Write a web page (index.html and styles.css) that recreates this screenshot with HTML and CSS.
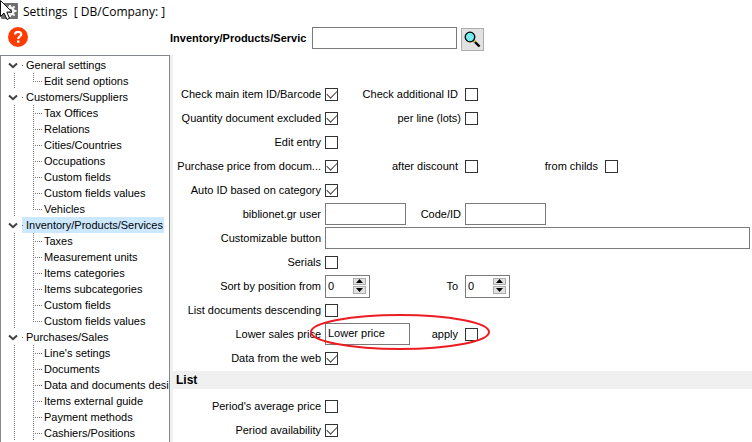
FILE: index.html
```html
<!DOCTYPE html>
<html lang="en">
<head>
<meta charset="utf-8">
<title>Settings</title>
<link rel="stylesheet" href="styles.css">
</head>
<body>
<header class="titlebar">
  <svg class="app-icon" width="19" height="22" viewBox="0 0 19 22" aria-hidden="true">
    <rect x="1" y="3" width="17" height="16" rx="1" fill="#6e6e6e"/>
    <circle cx="10" cy="11" r="3.5" fill="none" stroke="#f4f4f4" stroke-width="2.6"/>
    <path d="M10 5v2M10 15v2M14 11h2.5M6 7l2 2M13 14l1.6 1.6M14.6 6.4L13 8" stroke="#f4f4f4" stroke-width="2"/>
    <path d="M0.5 0.5V16.5L4 13L7 19.5L9.5 18.3L6.8 12H12Z" fill="#fff" stroke="#111" stroke-width="1"/>
  </svg>
  <h1 class="title">Settings&nbsp; [ DB/Company: ]</h1>
</header>

<div class="toolbar">
  <button class="help" type="button" aria-label="Help">
    <svg width="20" height="20" viewBox="0 0 20 20" aria-hidden="true">
      <circle cx="10" cy="10" r="10" fill="#ff3c00"/>
      <path d="M7 7.6C7 3.9 13.2 4 13.2 7.4C13.2 9.5 10.2 9.5 10.2 12" fill="none" stroke="#fff" stroke-width="2.2"/>
      <rect x="9" y="13.4" width="2.4" height="2.4" fill="#fff"/>
    </svg>
  </button>
  <label class="page-name" for="search">Inventory/Products/Servic</label>
  <input class="field search" id="search" type="text">
  <button class="find" type="button" aria-label="Search">
    <svg width="17" height="17" viewBox="0 0 17 17" aria-hidden="true">
      <path d="M10 10L15.5 15.5" stroke="#000" stroke-width="2.4"/>
      <path d="M10 11.2L11.4 9.8" stroke="#e8e000" stroke-width="1.6"/>
      <circle cx="6" cy="6" r="4.8" fill="#5fe8ee" stroke="#000" stroke-width="1.3"/>
      <path d="M3 6.5L6.5 3M4 8.5L8.5 4M6 9.2L9 6.2" stroke="#fff" stroke-width="1" stroke-dasharray="1 1"/>
    </svg>
  </button>
</div>

<div class="workspace">
  <nav class="tree" aria-label="Settings sections">
    <ul class="groups">
      <li>
        <div class="group"><svg class="chevron" viewBox="0 0 10 7"><path d="M1 1.5L5 5.2L9 1.5"/></svg><a href="#" class="group-name">General settings</a></div>
        <ul class="items">
          <li><a href="#">Edit send options</a></li>
        </ul>
      </li>
      <li>
        <div class="group"><svg class="chevron" viewBox="0 0 10 7"><path d="M1 1.5L5 5.2L9 1.5"/></svg><a href="#" class="group-name">Customers/Suppliers</a></div>
        <ul class="items">
          <li><a href="#">Tax Offices</a></li>
          <li><a href="#">Relations</a></li>
          <li><a href="#">Cities/Countries</a></li>
          <li><a href="#">Occupations</a></li>
          <li><a href="#">Custom fields</a></li>
          <li><a href="#">Custom fields values</a></li>
          <li><a href="#">Vehicles</a></li>
        </ul>
      </li>
      <li>
        <div class="group"><svg class="chevron" viewBox="0 0 10 7"><path d="M1 1.5L5 5.2L9 1.5"/></svg><a href="#" class="group-name selected">Inventory/Products/Services</a></div>
        <ul class="items">
          <li><a href="#">Taxes</a></li>
          <li><a href="#">Measurement units</a></li>
          <li><a href="#">Items categories</a></li>
          <li><a href="#">Items subcategories</a></li>
          <li><a href="#">Custom fields</a></li>
          <li><a href="#">Custom fields values</a></li>
        </ul>
      </li>
      <li>
        <div class="group"><svg class="chevron" viewBox="0 0 10 7"><path d="M1 1.5L5 5.2L9 1.5"/></svg><a href="#" class="group-name">Purchases/Sales</a></div>
        <ul class="items open">
          <li><a href="#">Line's setings</a></li>
          <li><a href="#">Documents</a></li>
          <li><a href="#">Data and documents desi</a></li>
          <li><a href="#">Items external guide</a></li>
          <li><a href="#">Payment methods</a></li>
          <li><a href="#">Cashiers/Positions</a></li>
        </ul>
      </li>
    </ul>
  </nav>

  <main class="panel">
    <form class="form">
      <div class="row">
        <label class="caption" for="main-id">Check main item ID/Barcode</label>
        <div class="cell"><input class="check" id="main-id" type="checkbox" checked><label class="next" for="add-id">Check additional ID</label></div>
        <div class="cell"><input class="check" id="add-id" type="checkbox"></div>
      </div>
      <div class="row">
        <label class="caption" for="qty">Quantity document excluded</label>
        <div class="cell"><input class="check" id="qty" type="checkbox" checked><label class="next tight" for="lots">per line (lots)</label></div>
        <div class="cell"><input class="check" id="lots" type="checkbox"></div>
      </div>
      <div class="row">
        <label class="caption" for="edit">Edit entry</label>
        <div class="cell"><input class="check" id="edit" type="checkbox"></div>
      </div>
      <div class="row">
        <label class="caption" for="purchase">Purchase price from docum...</label>
        <div class="cell"><input class="check" id="purchase" type="checkbox" checked><label class="next" for="discount">after discount</label></div>
        <div class="cell"><input class="check" id="discount" type="checkbox"><label class="next" for="childs">from childs</label></div>
        <div class="cell"><input class="check" id="childs" type="checkbox"></div>
      </div>
      <div class="row">
        <label class="caption" for="auto-id">Auto ID based on category</label>
        <div class="cell"><input class="check" id="auto-id" type="checkbox" checked></div>
      </div>
      <div class="row">
        <label class="caption" for="user">biblionet.gr user</label>
        <div class="cell"><input class="field short" id="user" type="text"><label class="next tight" for="code">Code/ID</label></div>
        <div class="cell"><input class="field short" id="code" type="text"></div>
      </div>
      <div class="row">
        <label class="caption" for="custom">Customizable button</label>
        <div class="cell wide"><input class="field full" id="custom" type="text"></div>
      </div>
      <div class="row">
        <label class="caption" for="serials">Serials</label>
        <div class="cell"><input class="check" id="serials" type="checkbox"></div>
      </div>
      <div class="row">
        <label class="caption" for="from">Sort by position from</label>
        <div class="cell">
          <span class="spin"><input id="from" type="text" value="0"><span class="steps"><button type="button" aria-label="Increase"><svg viewBox="0 0 7 4"><path d="M0 4L3.5 0L7 4Z"/></svg></button><button type="button" aria-label="Decrease"><svg viewBox="0 0 7 4"><path d="M0 0L3.5 4L7 0Z"/></svg></button></span></span>
          <label class="next" for="to">To</label>
        </div>
        <div class="cell">
          <span class="spin"><input id="to" type="text" value="0"><span class="steps"><button type="button" aria-label="Increase"><svg viewBox="0 0 7 4"><path d="M0 4L3.5 0L7 4Z"/></svg></button><button type="button" aria-label="Decrease"><svg viewBox="0 0 7 4"><path d="M0 0L3.5 4L7 0Z"/></svg></button></span></span>
        </div>
      </div>
      <div class="row">
        <label class="caption" for="descending">List documents descending</label>
        <div class="cell"><input class="check" id="descending" type="checkbox"></div>
      </div>
      <div class="row marked">
        <label class="caption" for="lower">Lower sales price</label>
        <div class="cell"><input class="field medium" id="lower" type="text" value="Lower price"><label class="next" for="apply">apply</label></div>
        <div class="cell"><input class="check" id="apply" type="checkbox"></div>
        <svg class="mark" width="182" height="38" viewBox="0 0 182 38" aria-hidden="true"><ellipse cx="91" cy="19" rx="89" ry="17"/></svg>
      </div>
      <div class="row">
        <label class="caption" for="web">Data from the web</label>
        <div class="cell"><input class="check" id="web" type="checkbox" checked></div>
      </div>
      <h2 class="section">List</h2>
      <div class="row">
        <label class="caption" for="average">Period's average price</label>
        <div class="cell"><input class="check" id="average" type="checkbox"></div>
      </div>
      <div class="row">
        <label class="caption" for="availability">Period availability</label>
        <div class="cell"><input class="check" id="availability" type="checkbox" checked></div>
      </div>
    </form>
  </main>
</div>
</body>
</html>
```
FILE: styles.css
```css
* { box-sizing: border-box; }

body {
  margin: 0;
  height: 100vh;
  display: flex;
  flex-direction: column;
  overflow: hidden;
  background: #fff;
  color: #000;
  font: 11px/16px "Liberation Sans", Arial, sans-serif;
}

ul { list-style: none; margin: 0; padding: 0; }
a { color: inherit; text-decoration: none; }
button, input { font: inherit; color: inherit; margin: 0; padding: 0; }

.titlebar {
  display: flex;
  align-items: center;
  gap: 4px;
  height: 23px;
}
.app-icon { align-self: flex-start; }
.title {
  margin: 0;
  font: 12px/20px "Open Sans", "Noto Sans", sans-serif;
}

.toolbar {
  display: flex;
  align-items: center;
  height: 32px;
  padding-left: 8px;
}
.help {
  width: 20px;
  height: 20px;
  margin-bottom: 4px;
  border: 0;
  background: none;
}
.help svg, .find svg { display: block; }
.page-name {
  width: 142px;
  margin: 0 0 2px 142px;
  overflow: hidden;
  white-space: nowrap;
  font-weight: bold;
}
.field {
  height: 22px;
  padding: 0 2px 2px;
  border: 1px solid #7a7a7a;
  background: #fff;
}
.search { width: 145px; margin-bottom: 2px; }
.find {
  display: grid;
  place-items: center;
  width: 23px;
  height: 23px;
  margin-left: 4px;
  border: 1px solid #adadad;
  background: #e1e1e1;
}

.workspace {
  flex: 1;
  min-height: 0;
  display: flex;
}

.tree {
  flex: none;
  width: 170px;
  padding-top: 1px;
  overflow: hidden;
  border: 1px solid #828790;
  border-bottom: 0;
  white-space: nowrap;
}
.group {
  display: flex;
  align-items: center;
  height: 16px;
  padding-left: 7px;
}
.chevron {
  width: 10px;
  height: 7px;
  margin-right: 4px;
  fill: none;
  stroke: #404040;
  stroke-width: 2;
}
.group-name {
  padding: 0 1px 0 4px;
  background: linear-gradient(#808080, #808080) 0 8px / 1px 1px no-repeat;
}
.group-name.selected { background-color: #cce8ff; }

.items {
  padding-left: 32px;
  background: repeating-linear-gradient(#808080 0 1px, transparent 1px 2px) 13px 0 / 1px 100% no-repeat;
}
.items li {
  height: 16px;
  padding-left: 11px;
  background:
    repeating-linear-gradient(#808080 0 1px, transparent 1px 2px) 0 0 / 1px 16px no-repeat,
    repeating-linear-gradient(90deg, #808080 0 1px, transparent 1px 2px) 0 8px / 9px 1px no-repeat;
}
.items:not(.open) li:last-child { background-size: 1px 8px, 9px 1px; }

.panel {
  flex: 1;
  min-width: 0;
  border-left: 3px solid #f0f0f0;
}
.form { padding-top: 27px; }
.row {
  display: grid;
  grid-template-columns: 148px 136px 136px 1fr;
  column-gap: 4px;
  align-items: center;
  height: 24px;
}
.caption { text-align: right; white-space: nowrap; }
.cell { display: flex; align-items: center; }
.cell.wide { grid-column: 2 / -1; padding-right: 2px; }
.next { margin-left: auto; padding-right: 3px; }
.next.tight { padding-right: 0; }

.short { width: 81px; }
.medium { width: 85px; }
.full { width: 100%; }

.check {
  appearance: none;
  width: 13px;
  height: 13px;
  border: 1px solid #333;
  background: #fff;
}
.check:checked::before {
  content: "";
  display: block;
  width: 9px;
  height: 5px;
  margin: 2px 1px;
  border: solid #404040;
  border-width: 0 0 1px 1px;
  transform: translateY(-1px) rotate(-45deg);
}

.spin {
  display: flex;
  width: 45px;
  height: 23px;
  padding: 2px 3px 3px 2px;
  border: 1px solid #7a7a7a;
}
.spin input {
  width: 25px;
  height: 16px;
  border: 0;
  background: none;
}
.steps { display: grid; gap: 1px; width: 13px; }
.steps button {
  display: grid;
  place-items: center;
  border: 1px solid #adadad;
  background: #e1e1e1;
}
.steps svg { display: block; width: 7px; height: 4px; }

.marked { position: relative; }
.mark {
  position: absolute;
  left: 136px;
  top: -9px;
  fill: none;
  stroke: #ed1c24;
  stroke-width: 2;
  pointer-events: none;
}

.section {
  margin: 1px 0 5px;
  padding: 1px 3px;
  background: #f0f0f0;
  font-size: 12px;
  line-height: 16px;
}
```
